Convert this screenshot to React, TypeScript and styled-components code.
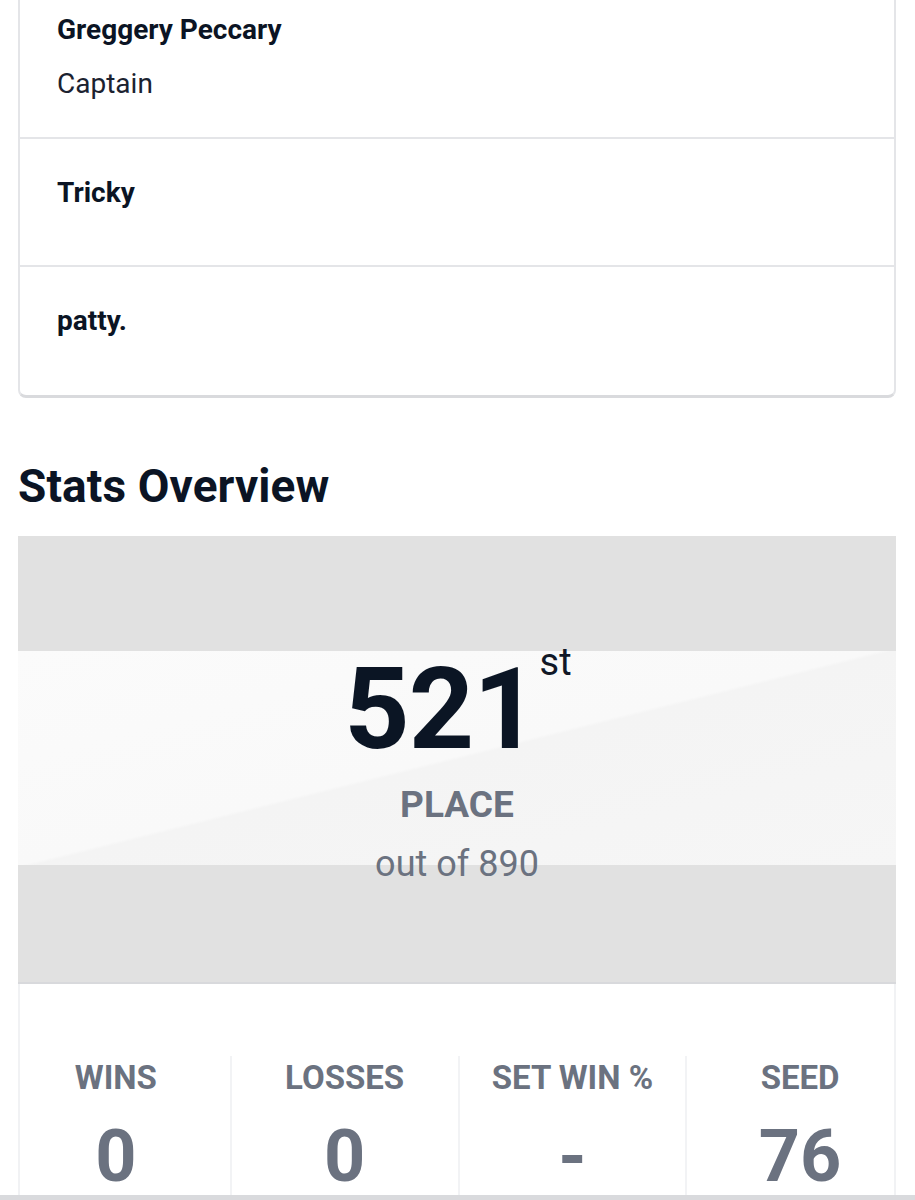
import React from "react";
import styled, { createGlobalStyle } from "styled-components";

const GlobalStyle = createGlobalStyle`
  html, body {
    margin: 0;
    padding: 0;
    background: #ffffff;
  }
  body {
    font-family: Roboto, "Noto Sans", "Liberation Sans", sans-serif;
    color: #0b1424;
    overflow: hidden;
  }
  * { box-sizing: border-box; }
`;

const Page = styled.div`
  padding: 0 19px 0 18px;
`;

const MembersCard = styled.div`
  margin-top: -26px;
  border: 2px solid #e4e5e8;
  border-bottom: 3px solid #d9dadd;
  border-radius: 8px;
  background: #ffffff;
`;

const MemberRow = styled.div<{ $last?: boolean }>`
  min-height: 128px;
  padding: 33px 37px 32px;
  border-bottom: ${(p) => (p.$last ? "none" : "2px solid #e4e5e8")};
  display: flex;
  flex-direction: column;
`;

const MemberName = styled.div`
  font-size: 28px;
  line-height: 42px;
  font-weight: 700;
  color: #0b1424;
`;

const MemberRole = styled.div`
  margin-top: 12px;
  font-size: 28px;
  line-height: 42px;
  font-weight: 400;
  color: #1b2230;
`;

const SectionTitle = styled.h2`
  margin: 61px 0 23px;
  font-size: 46px;
  line-height: 54px;
  font-weight: 700;
  color: #0b1424;
  letter-spacing: 0.1px;
`;

const StatsCard = styled.div`
  background: #ffffff;
`;

const Hero = styled.div`
  height: 448px;
  padding-top: 116px;
  border-bottom: 2px solid #d8d9dc;
  display: flex;
  flex-direction: column;
  align-items: center;
  background:
    linear-gradient(166deg, #fbfbfb 0%, #f9f9f9 49.6%, #f4f4f4 50.4%, #f6f6f6 100%)
      0 115px / 100% 214px no-repeat,
    #e1e1e1;
`;

const PlaceLine = styled.div`
  display: flex;
  align-items: flex-start;
  margin-left: 2px;
`;

const PlaceNumber = styled.div`
  font-size: 114px;
  line-height: 114px;
  font-weight: 700;
  color: #0b1524;
  letter-spacing: -1px;
`;

const PlaceSuffix = styled.div`
  margin-top: -9px;
  margin-left: 2px;
  font-size: 38px;
  line-height: 38px;
  font-weight: 400;
  color: #111827;
`;

const PlaceLabel = styled.div`
  margin-top: 17px;
  font-size: 37px;
  line-height: 44px;
  font-weight: 700;
  color: #6b7280;
`;

const PlaceTotal = styled.div`
  margin-top: 16px;
  font-size: 36px;
  line-height: 43px;
  font-weight: 400;
  color: #6b7280;
`;

const StatsBody = styled.div`
  border-left: 2px solid #f1f2f4;
  border-right: 2px solid #f1f2f4;
  padding-top: 72px;
`;

const StatsGrid = styled.div`
  margin: 0 -19px 0 -18px;
  display: grid;
  grid-template-columns: repeat(4, 1fr);
`;

const StatCell = styled.div<{ $first?: boolean }>`
  padding-top: 2px;
  height: 144px;
  display: flex;
  flex-direction: column;
  align-items: center;
  border-left: ${(p) => (p.$first ? "none" : "2px solid #f2f3f5")};
`;

const StatLabel = styled.div`
  font-size: 33px;
  line-height: 40px;
  font-weight: 700;
  color: #6b7280;
  text-transform: uppercase;
`;

const StatValue = styled.div`
  margin-top: 29px;
  font-size: 72px;
  line-height: 60px;
  font-weight: 700;
  color: #6b7280;
`;

const BottomBar = styled.div`
  position: fixed;
  left: 0;
  right: 0;
  bottom: 0;
  height: 5px;
  background: #d9dadd;
  z-index: 2;
`;

const members = [
  { name: "Greggery Peccary", role: "Captain" },
  { name: "Tricky" },
  { name: "patty." },
];

const stats = [
  { label: "Wins", value: "0" },
  { label: "Losses", value: "0" },
  { label: "Set Win %", value: "-" },
  { label: "Seed", value: "76" },
];

export default function App() {
  return (
    <>
      <GlobalStyle />
      <Page>
        <MembersCard>
          {members.map((m, i) => (
            <MemberRow key={m.name} $last={i === members.length - 1}>
              <MemberName>{m.name}</MemberName>
              {m.role && <MemberRole>{m.role}</MemberRole>}
            </MemberRow>
          ))}
        </MembersCard>

        <SectionTitle>Stats Overview</SectionTitle>

        <StatsCard>
          <Hero>
            <PlaceLine>
              <PlaceNumber>521</PlaceNumber>
              <PlaceSuffix>st</PlaceSuffix>
            </PlaceLine>
            <PlaceLabel>PLACE</PlaceLabel>
            <PlaceTotal>out of 890</PlaceTotal>
          </Hero>
          <StatsBody>
            <StatsGrid>
              {stats.map((s, i) => (
                <StatCell key={s.label} $first={i === 0}>
                  <StatLabel>{s.label}</StatLabel>
                  <StatValue>{s.value}</StatValue>
                </StatCell>
              ))}
            </StatsGrid>
          </StatsBody>
        </StatsCard>
      </Page>
      <BottomBar />
    </>
  );
}
